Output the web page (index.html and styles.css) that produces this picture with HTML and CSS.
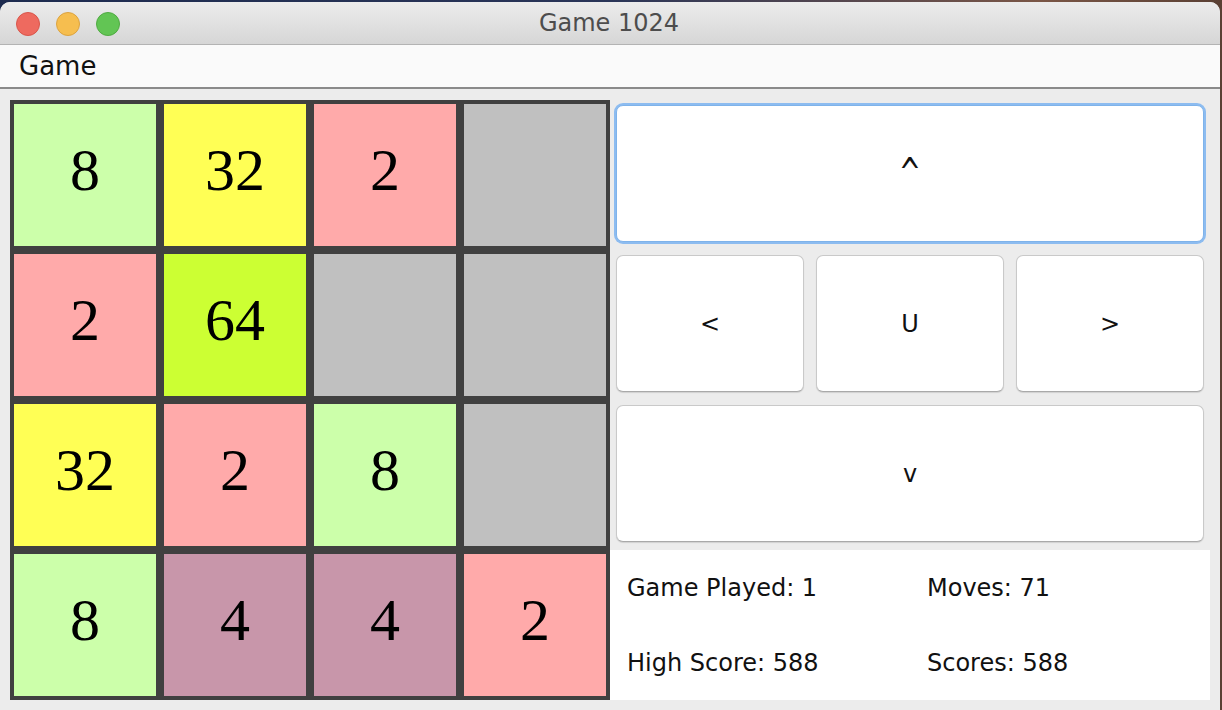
FILE: index.html
```html
<!DOCTYPE html>
<html>
<head>
<meta charset="utf-8">
<title>Game 1024</title>
<link rel="stylesheet" href="styles.css">
</head>
<body>
<div class="desktop">
  <div class="window">
    <div class="titlebar">
      <div class="lights">
        <span class="light red"></span>
        <span class="light yellow"></span>
        <span class="light green"></span>
      </div>
      <div class="title">Game 1024</div>
    </div>
    <div class="menubar"><span class="menu-item">Game</span></div>
    <div class="content">
      <div class="board">
        <div class="tile t8">8</div>
        <div class="tile t32">32</div>
        <div class="tile t2">2</div>
        <div class="tile empty"></div>

        <div class="tile t2">2</div>
        <div class="tile t64">64</div>
        <div class="tile empty"></div>
        <div class="tile empty"></div>

        <div class="tile t32">32</div>
        <div class="tile t2">2</div>
        <div class="tile t8">8</div>
        <div class="tile empty"></div>

        <div class="tile t8">8</div>
        <div class="tile t4">4</div>
        <div class="tile t4">4</div>
        <div class="tile t2">2</div>
      </div>
      <div class="controls">
        <div class="row row-single">
          <button class="btn btn-focus"><span class="caret">^</span></button>
        </div>
        <div class="row row-triple">
          <button class="btn">&lt;</button>
          <button class="btn">U</button>
          <button class="btn">&gt;</button>
        </div>
        <div class="row row-single">
          <button class="btn">v</button>
        </div>
        <div class="stats">
          <div class="stat">Game Played: 1</div>
          <div class="stat">Moves: 71</div>
          <div class="stat">High Score: 588</div>
          <div class="stat">Scores: 588</div>
        </div>
      </div>
    </div>
  </div>
</div>
</body>
</html>
```

FILE: styles.css
```css
html, body {
  margin: 0;
  padding: 0;
  width: 1222px;
  height: 710px;
  overflow: hidden;
}

body {
  background: linear-gradient(to right, #1d2b4f 0%, #2a3558 50%, #7a5646 85%, #5a4034 100%);
  font-family: "DejaVu Sans", "Liberation Sans", sans-serif;
}

.desktop {
  padding-top: 2px;
  height: 708px;
}

.window {
  width: 1220px;
  height: 708px;
  background: #ececec;
  border-radius: 10px 10px 0 0;
  overflow: hidden;
  display: flex;
  flex-direction: column;
}

.titlebar {
  height: 42px;
  flex: none;
  background: linear-gradient(to bottom, #ececec, #d6d6d6);
  border-bottom: 1px solid #b3b3b3;
  position: relative;
  display: flex;
  align-items: center;
  justify-content: center;
}

.lights {
  position: absolute;
  left: 16px;
  top: 10px;
  display: flex;
  gap: 16px;
}

.light {
  width: 22px;
  height: 22px;
  border-radius: 50%;
  display: block;
}

.red { background: #ee6a5f; border: 1px solid #d8564b; }
.yellow { background: #f6be4f; border: 1px solid #dba340; }
.green { background: #62c554; border: 1px solid #50aa42; }

.title {
  font-size: 24px;
  color: #4d4d4d;
  margin-left: -2px;
}

.menubar {
  height: 42px;
  flex: none;
  background: #fafafa;
  border-bottom: 2px solid #8a8a8a;
  display: flex;
  align-items: center;
  padding-left: 19px;
}

.menu-item {
  font-size: 26px;
  color: #111;
}

.content {
  flex: 1;
  display: flex;
  padding: 11px 0 0 10px;
}

.board {
  width: 600px;
  height: 600px;
  display: grid;
  grid-template-columns: repeat(4, 150px);
  grid-template-rows: repeat(4, 150px);
}

.tile {
  box-sizing: border-box;
  border: 4px solid #404040;
  display: flex;
  align-items: center;
  justify-content: center;
  padding-bottom: 9px;
  font-family: "Liberation Serif", "Times New Roman", serif;
  font-size: 60px;
  color: #000;
}

.t2 { background: #ffaaaa; }
.t4 { background: #c896aa; }
.t8 { background: #ccffaa; }
.t32 { background: #ffff55; }
.t64 { background: #ccff33; }
.empty { background: #c0c0c0; }

.controls {
  width: 600px;
  height: 600px;
  display: grid;
  grid-template-rows: repeat(4, 150px);
}

.row {
  display: grid;
}

.row-single {
  grid-template-columns: 1fr;
  padding: 5px 6px 8px 6px;
}

.row-triple {
  grid-template-columns: repeat(3, 1fr);
}

.row-triple .btn {
  margin: 5px 6px 8px 6px;
}

.btn {
  background: #ffffff;
  border: 1px solid #c9c9c9;
  border-bottom-color: #a9a9a9;
  border-radius: 7px;
  box-shadow: 0 1px 1px rgba(0, 0, 0, 0.12);
  font-family: "DejaVu Sans", "Liberation Sans", sans-serif;
  font-size: 24px;
  color: #111;
  padding: 0;
  display: flex;
  align-items: center;
  justify-content: center;
}

.btn-focus {
  border: 1px solid #7fb3ea;
  box-shadow: 0 0 0 2px #8dbcf0;
}

.caret {
  display: inline-block;
  font-size: 26px;
  transform: scaleY(1.6);
  margin-top: -2px;
}

.stats {
  background: #ffffff;
  display: grid;
  grid-template-columns: 1fr 1fr;
  grid-template-rows: 1fr 1fr;
}

.stat {
  display: flex;
  align-items: center;
  padding-left: 17px;
  font-size: 24px;
  color: #111;
}
```
